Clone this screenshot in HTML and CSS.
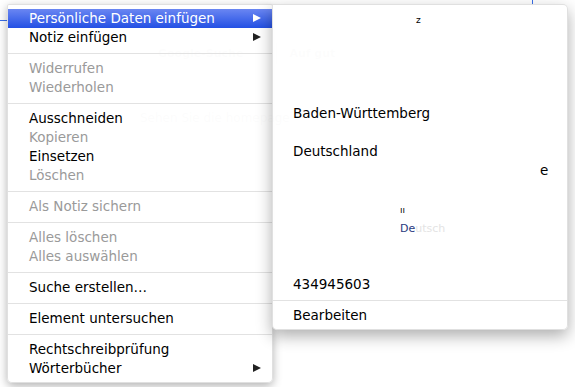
FILE: index.html
```html
<!DOCTYPE html>
<html lang="de">
<head>
    <meta charset="UTF-8">
    <title>Kontextmenü</title>
    <link rel="stylesheet" href="styles.css">
</head>
<body>

    <div class="seite">
        <div class="linie-links"></div>
        <div class="knoepfe">
            <span class="knopf">Google-Suche</span>
            <span class="knopf">Auf gut</span>
        </div>
        <p class="hinweis">Sehen Sie die homepage</p>
        <div class="linie-oben"></div>
    </div>

    <div class="menu haupt">
        <div class="eintrag aktiv">Persönliche Daten einfügen<span class="pfeil"></span></div>
        <div class="eintrag">Notiz einfügen<span class="pfeil"></span></div>
        <div class="trenner"></div>
        <div class="eintrag aus">Widerrufen</div>
        <div class="eintrag aus">Wiederholen</div>
        <div class="trenner"></div>
        <div class="eintrag">Ausschneiden</div>
        <div class="eintrag aus">Kopieren</div>
        <div class="eintrag">Einsetzen</div>
        <div class="eintrag aus">Löschen</div>
        <div class="trenner"></div>
        <div class="eintrag aus">Als Notiz sichern</div>
        <div class="trenner"></div>
        <div class="eintrag aus">Alles löschen</div>
        <div class="eintrag aus">Alles auswählen</div>
        <div class="trenner"></div>
        <div class="eintrag">Suche erstellen…</div>
        <div class="trenner"></div>
        <div class="eintrag">Element untersuchen</div>
        <div class="trenner"></div>
        <div class="eintrag">Rechtschreibprüfung</div>
        <div class="eintrag">Wörterbücher<span class="pfeil"></span></div>
    </div>

    <div class="menu unter">
        <div class="eintrag"><span class="rest klein">z</span></div>
        <div class="eintrag"></div>
        <div class="eintrag"></div>
        <div class="eintrag"></div>
        <div class="eintrag"></div>
        <div class="eintrag">Baden-Württemberg</div>
        <div class="eintrag"></div>
        <div class="eintrag">Deutschland</div>
        <div class="eintrag"><span class="rest rechts">e</span></div>
        <div class="eintrag"></div>
        <div class="eintrag"><span class="rest klein mitte">ıı</span></div>
        <div class="eintrag"><span class="rest mitte blass">De<span class="hauch">utsch</span></span></div>
        <div class="eintrag"></div>
        <div class="eintrag"></div>
        <div class="eintrag">434945603</div>
        <div class="trenner"></div>
        <div class="eintrag">Bearbeiten</div>
    </div>

</body>
</html>
```

FILE: styles.css
```css
body {
    margin: 0;
    background: #fff;
    font-family: "DejaVu Sans", Verdana, sans-serif;
    font-size: 13.5px;
    color: #000;
}
.seite {
    height: 387px;
    overflow: hidden;
}
.linie-links {
    width: 8px;
    height: 1px;
    margin-top: 20px;
    background: #3a6ee8;
}
.knoepfe {
    display: flex;
    gap: 20px;
    margin: 20px 0 0 145px;
}
.knopf {
    padding: 5px 12px;
    border: 1px solid #eee;
    border-radius: 3px;
    color: #aaa;
    font-size: 11px;
    font-weight: bold;
}
.hinweis {
    margin: 45px 0 0 140px;
    color: #999;
    font-size: 12px;
}
.linie-oben {
    position: absolute;
    left: 532px;
    top: 0;
    width: 1px;
    height: 6px;
    background: #3a6ee8;
}
.menu {
    position: absolute;
    top: 4px;
    background: rgba(255, 255, 255, 0.97);
    border: 1px solid rgba(0, 0, 0, 0.12);
    padding: 4px 0;
    box-sizing: border-box;
}
.haupt {
    left: 7px;
    width: 266px;
    border-radius: 2px 2px 5px 5px;
    box-shadow: 0 3px 10px rgba(0, 0, 0, 0.3);
    z-index: 1;
}
.unter {
    left: 272px;
    width: 296px;
    border-radius: 0 5px 5px 5px;
    box-shadow: 0 6px 16px rgba(0, 0, 0, 0.32);
    z-index: 2;
}
.eintrag {
    position: relative;
    height: 19px;
    line-height: 19px;
    padding-left: 21px;
    white-space: nowrap;
}
.unter .eintrag {
    padding-left: 20px;
}
.aus {
    color: #9a9a9a;
}
.aktiv {
    color: #fff;
    background: linear-gradient(#6a86f2, #2350e4);
}
.pfeil {
    position: absolute;
    left: 245px;
    top: 5px;
    width: 0;
    height: 0;
    border-left: 8px solid #222;
    border-top: 4.5px solid transparent;
    border-bottom: 4.5px solid transparent;
}
.aktiv .pfeil {
    border-left-color: #fff;
}
.trenner {
    height: 1px;
    margin: 6px 0 5px;
    background: #e2e2e2;
}
.rest {
    margin-left: 123px;
}
.klein {
    font-size: 9px;
}
.rechts {
    margin-left: 247px;
}
.mitte {
    margin-left: 107px;
}
.blass {
    color: #2a3a80;
    font-size: 11px;
}
.hauch {
    color: #e4e4e4;
}
```
